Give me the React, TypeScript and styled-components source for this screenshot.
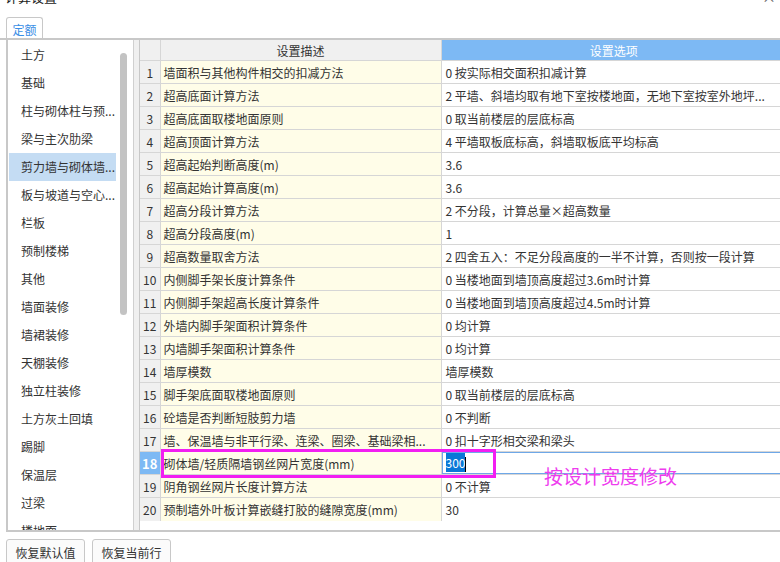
import React from 'react';
import styled, { createGlobalStyle } from 'styled-components';

const GlobalStyle = createGlobalStyle`
  html, body {
    margin: 0;
    padding: 0;
    background: #fff;
    overflow: hidden;
  }
  body {
    font-family: "Noto Sans CJK SC", "Microsoft YaHei", sans-serif;
    font-size: 12px;
    color: #333;
  }
`;

const Window = styled.div`
  width: 780px;
  height: 562px;
  overflow: hidden;
  display: flex;
  flex-direction: column;
`;

const TitleBar = styled.div`
  height: 17px;
  overflow: hidden;
  display: flex;
  justify-content: space-between;
  flex-shrink: 0;
`;

const Title = styled.div`
  margin: -11px 0 0 5px;
  font-size: 13px;
  line-height: 16px;
  color: #222;
`;

const WinControls = styled.div`
  margin: -12px 4px 0 0;
  display: flex;
  gap: 14px;
  font-size: 14px;
  line-height: 16px;
  color: #666;
`;

const TabStrip = styled.div`
  height: 21px;
  display: flex;
  padding-left: 6px;
  flex-shrink: 0;
`;

const Tab = styled.div`
  width: 35px;
  border: 1px solid #c8c8c8;
  border-bottom: none;
  border-radius: 3px 3px 0 0;
  color: #3a8ee6;
  display: flex;
  align-items: center;
  justify-content: center;
  padding-top: 2px;
`;

const Main = styled.div`
  border-top: 2px solid #c8c8c8;
  flex-shrink: 0;
`;

const Content = styled.div`
  margin-left: 6px;
  height: 490px;
  display: flex;
  border-left: 2px solid #c8c8c8;
  border-bottom: 2px solid #c8c8c8;
`;

const SidePanel = styled.div`
  width: 125px;
  display: flex;
  border-right: 1px solid #d0d0d0;
  overflow: hidden;
`;

const SideList = styled.div`
  width: 111px;
  padding: 1px 0 0 1px;
`;

const SideItem = styled.div<{ selected?: boolean }>`
  height: 28px;
  line-height: 28px;
  padding-left: 12px;
  white-space: nowrap;
  background: ${p => (p.selected ? '#c4dcf3' : 'transparent')};
  color: #333;
`;

const ScrollTrack = styled.div`
  width: 14px;
  padding: 13px 0 0 4px;
`;

const ScrollThumb = styled.div`
  width: 7px;
  height: 262px;
  border-radius: 4px;
  background: #c3c3c3;
`;

const Splitter = styled.div`
  width: 5px;
  background: #f0f0f0;
`;

const TableArea = styled.div`
  position: relative;
  flex: 1;
  border-left: 1px solid #c8c8c8;
  overflow: hidden;
`;

const Grid = styled.table`
  border-collapse: collapse;
  border-style: hidden;
  table-layout: fixed;
  width: 646px;
`;

const HeadCell = styled.th<{ active?: boolean }>`
  height: 20px;
  padding: 0;
  font-weight: normal;
  text-align: center;
  border: 1px solid #d6d6d6;
  background: ${p => (p.active ? '#7db9f4' : '#f0f0f0')};
  color: ${p => (p.active ? '#fff' : '#333')};
`;

const Row = styled.tr`
  height: 23px;
`;

const NumCell = styled.td<{ active?: boolean }>`
  padding: 0;
  text-align: center;
  border: 1px solid #d6d6d6;
  background: ${p => (p.active ? '#7db9f4' : '#f0f0f0')};
  color: ${p => (p.active ? '#fff' : '#333')};
  font-weight: ${p => (p.active ? 'bold' : 'normal')};
  font-size: ${p => (p.active ? '13px' : '12px')};
`;

const DescCell = styled.td`
  padding: 0 0 0 3px;
  border: 1px solid #d6d6d6;
  background: #fffde8;
  white-space: nowrap;
  overflow: hidden;
`;

const OptCell = styled.td<{ editing?: boolean }>`
  padding: 0 4px;
  border: 1px solid #d6d6d6;
  background: #fff;
  white-space: nowrap;
  overflow: hidden;
  box-shadow: ${p => (p.editing ? 'inset 0 0 0 1px #6ea8e8' : 'none')};
`;

const Selected = styled.span`
  background: #0a78d7;
  color: #fff;
  padding: 1px 0;
`;

const Caret = styled.span`
  display: inline-block;
  width: 1px;
  height: 15px;
  background: #000;
  vertical-align: middle;
`;

const MarkBox = styled.div`
  position: absolute;
  left: 21px;
  top: 409px;
  width: 329px;
  height: 23px;
  border: 3px solid #f21ef2;
`;

const MarkNote = styled.div`
  position: absolute;
  left: 404px;
  top: 424px;
  font-size: 19px;
  line-height: 24px;
  color: #ee3cee;
  white-space: nowrap;
`;

const Footer = styled.div`
  display: flex;
  gap: 7px;
  padding: 7px 0 0 6px;
`;

const Button = styled.button`
  width: 79px;
  height: 27px;
  border: 1px solid #c8c8c8;
  border-radius: 3px;
  background: #fbfbfb;
  font-family: inherit;
  font-size: 12px;
  color: #333;
  padding: 0;
`;

const sideItems = [
  '土方', '基础', '柱与砌体柱与预...', '梁与主次肋梁', '剪力墙与砌体墙...', '板与坡道与空心...',
  '栏板', '预制楼梯', '其他', '墙面装修', '墙裙装修', '天棚装修', '独立柱装修', '土方灰土回填',
  '踢脚', '保温层', '过梁', '楼地面',
];

const rows: [string, string][] = [
  ['墙面积与其他构件相交的扣减方法', '0 按实际相交面积扣减计算'],
  ['超高底面计算方法', '2 平墙、斜墙均取有地下室按楼地面，无地下室按室外地坪...'],
  ['超高底面取楼地面原则', '0 取当前楼层的层底标高'],
  ['超高顶面计算方法', '4 平墙取板底标高，斜墙取板底平均标高'],
  ['超高起始判断高度(m)', '3.6'],
  ['超高起始计算高度(m)', '3.6'],
  ['超高分段计算方法', '2 不分段，计算总量×超高数量'],
  ['超高分段高度(m)', '1'],
  ['超高数量取舍方法', '2 四舍五入：不足分段高度的一半不计算，否则按一段计算'],
  ['内侧脚手架长度计算条件', '0 当楼地面到墙顶高度超过3.6m时计算'],
  ['内侧脚手架超高长度计算条件', '0 当楼地面到墙顶高度超过4.5m时计算'],
  ['外墙内脚手架面积计算条件', '0 均计算'],
  ['内墙脚手架面积计算条件', '0 均计算'],
  ['墙厚模数', '墙厚模数'],
  ['脚手架底面取楼地面原则', '0 取当前楼层的层底标高'],
  ['砼墙是否判断短肢剪力墙', '0 不判断'],
  ['墙、保温墙与非平行梁、连梁、圈梁、基础梁相...', '0 扣十字形相交梁和梁头'],
  ['砌体墙/轻质隔墙钢丝网片宽度(mm)', '300'],
  ['阴角钢丝网片长度计算方法', '0 不计算'],
  ['预制墙外叶板计算嵌缝打胶的缝隙宽度(mm)', '30'],
];

const EDIT_ROW = 17;

export default function App() {
  return (
    <Window>
      <GlobalStyle />
      <TitleBar>
        <Title>计算设置</Title>
        <WinControls>
          <span>—</span>
          <span>×</span>
        </WinControls>
      </TitleBar>
      <TabStrip>
        <Tab>定额</Tab>
      </TabStrip>
      <Main>
        <Content>
          <SidePanel>
            <SideList>
              {sideItems.map((name, i) => (
                <SideItem key={name} selected={i === 4}>{name}</SideItem>
              ))}
            </SideList>
            <ScrollTrack>
              <ScrollThumb />
            </ScrollTrack>
          </SidePanel>
          <Splitter />
          <TableArea>
            <Grid>
              <colgroup>
                <col style={{ width: 20 }} />
                <col style={{ width: 281 }} />
                <col style={{ width: 345 }} />
              </colgroup>
              <thead>
                <tr>
                  <HeadCell />
                  <HeadCell>设置描述</HeadCell>
                  <HeadCell active>设置选项</HeadCell>
                </tr>
              </thead>
              <tbody>
                {rows.map(([desc, opt], i) => (
                  <Row key={i}>
                    <NumCell active={i === EDIT_ROW}>{i + 1}</NumCell>
                    <DescCell>{desc}</DescCell>
                    {i === EDIT_ROW ? (
                      <OptCell editing>
                        <Selected>{opt}</Selected>
                        <Caret />
                      </OptCell>
                    ) : (
                      <OptCell>{opt}</OptCell>
                    )}
                  </Row>
                ))}
              </tbody>
            </Grid>
            <MarkBox />
            <MarkNote>按设计宽度修改</MarkNote>
          </TableArea>
        </Content>
      </Main>
      <Footer>
        <Button>恢复默认值</Button>
        <Button>恢复当前行</Button>
      </Footer>
    </Window>
  );
}
